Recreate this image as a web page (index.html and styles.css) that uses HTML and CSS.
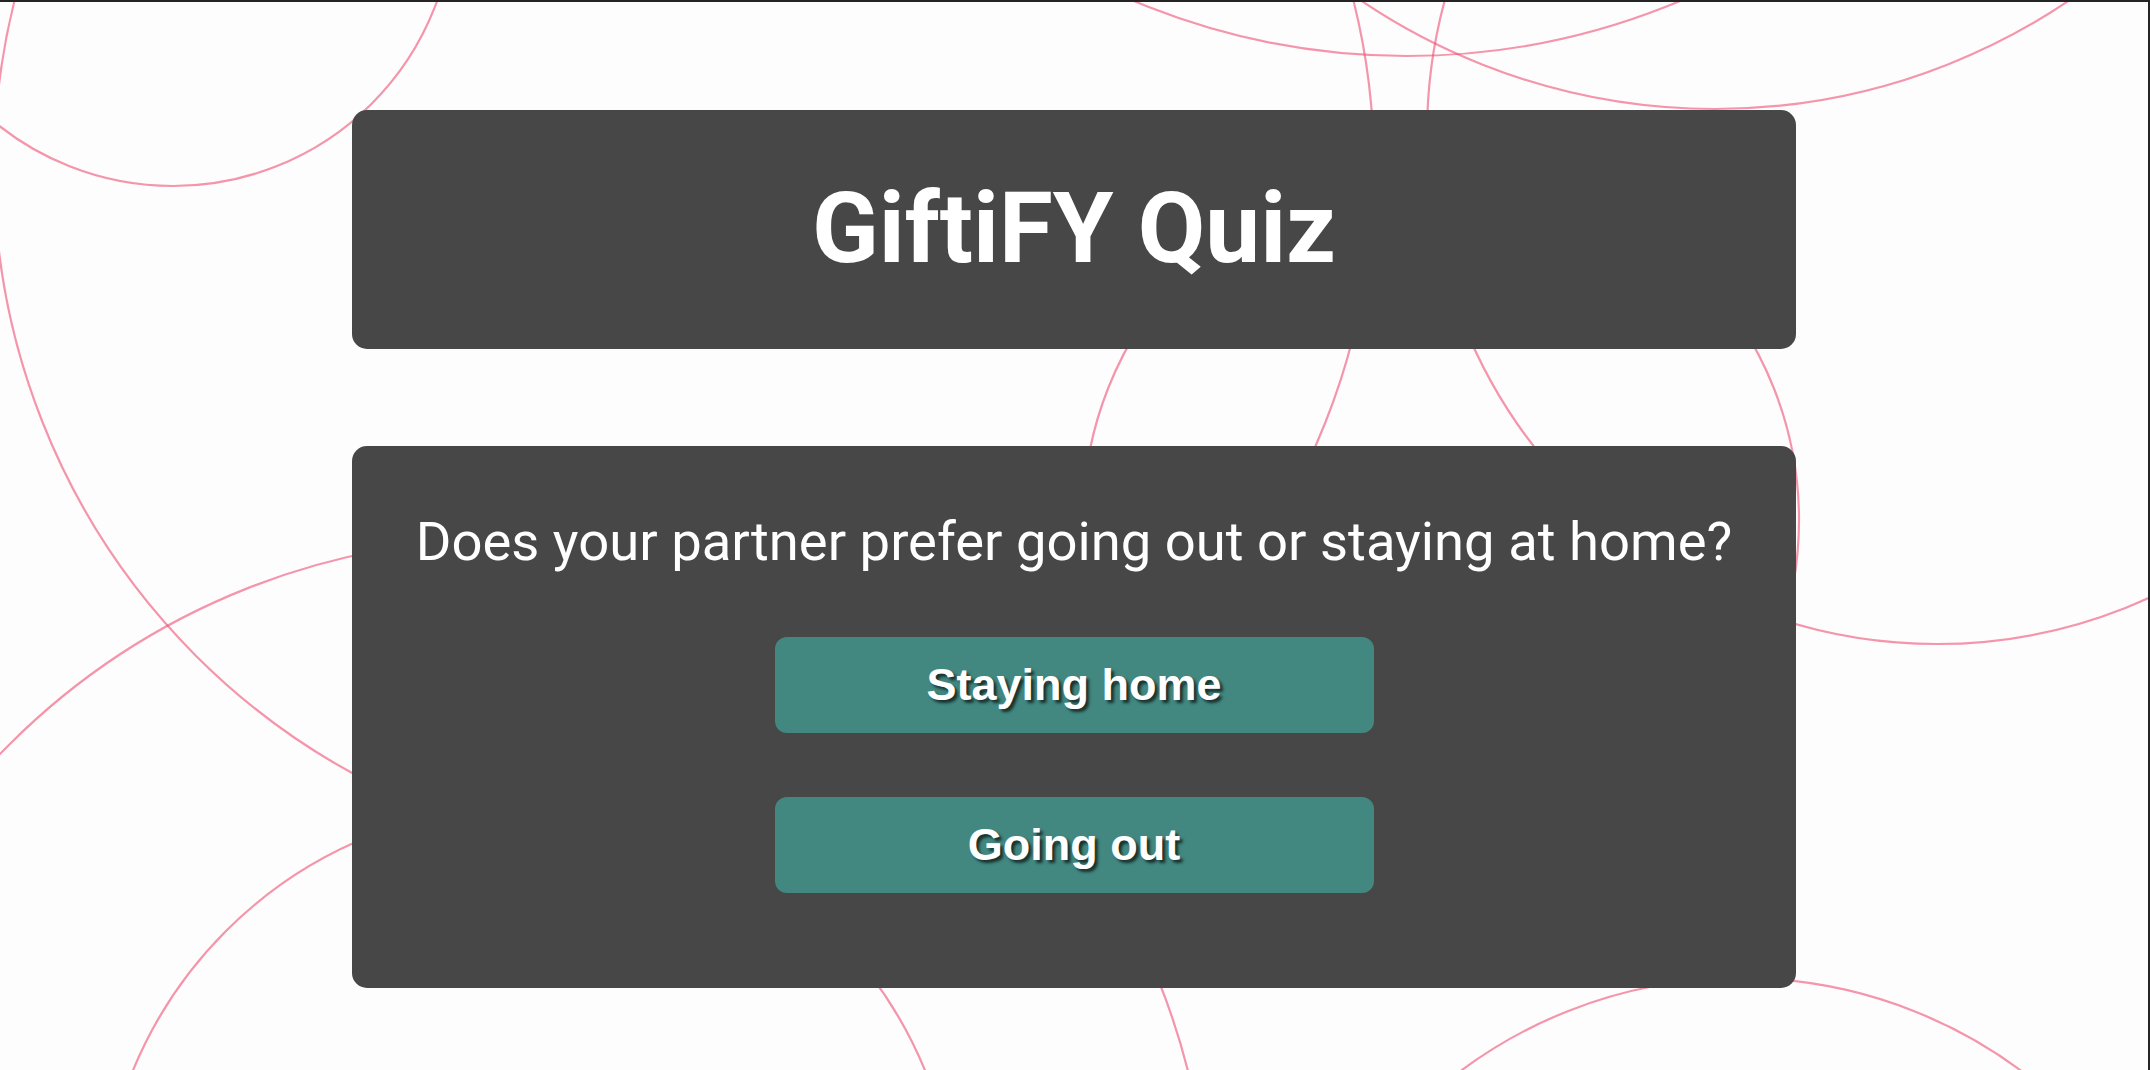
FILE: index.html
```html
<!DOCTYPE html>
<html lang="en">
<head>
<meta charset="utf-8">
<title>GiftiFY Quiz</title>
<link rel="stylesheet" href="styles.css">
</head>
<body>
<div class="page">
  <svg class="bg" viewBox="0 2 2148 1068" preserveAspectRatio="none" aria-hidden="true">
    <g class="rings">
      <circle cx="173" cy="-95" r="281"/>
      <circle cx="684" cy="168" r="690"/>
      <circle cx="1407" cy="-649" r="705"/>
      <circle cx="1715" cy="-522" r="631"/>
      <circle cx="1937" cy="134" r="510"/>
      <circle cx="1441" cy="520" r="358"/>
      <circle cx="529" cy="1234" r="428.5"/>
      <circle cx="506" cy="1242" r="703"/>
      <circle cx="1741" cy="1447" r="469"/>
    </g>
  </svg>
  <main class="content">
    <header class="card title-card">
      <h1 class="title">GiftiFY Quiz</h1>
    </header>
    <section class="card question-card">
      <p class="question">Does your partner prefer going out or staying at home?</p>
      <button class="answer" type="button">Staying home</button>
      <button class="answer" type="button">Going out</button>
    </section>
  </main>
</div>
</body>
</html>
```

FILE: styles.css
```css
html, body {
  margin: 0;
  padding: 0;
}

body {
  background: #fefdfd;
  font-family: Roboto, "Liberation Sans", Arial, sans-serif;
  overflow: hidden;
}

.page {
  position: relative;
  box-sizing: border-box;
  height: 100vh;
  width: 100vw;
  border-top: 2px solid #242424;
  border-right: 2px solid #242424;
  overflow: hidden;
}

.bg {
  position: absolute;
  top: 0;
  left: 0;
  width: 100%;
  height: 100%;
  z-index: 0;
}

.rings circle {
  fill: none;
  stroke: #ec4a70;
  stroke-opacity: 0.58;
  stroke-width: 2.2;
}

.content {
  position: relative;
  z-index: 1;
  display: flex;
  flex-direction: column;
  align-items: center;
  gap: 97px;
  padding-top: 108px;
}

.card {
  box-sizing: border-box;
  width: 1444px;
  background: #474747;
  border-radius: 15px;
}

.title-card {
  height: 239px;
  display: flex;
  align-items: center;
  justify-content: center;
}

.title {
  margin: 0;
  color: #ffffff;
  font-family: Roboto, "Liberation Sans", sans-serif;
  font-weight: 700;
  font-size: 98px;
  line-height: 1.172;
}

.question-card {
  height: 542px;
  padding: 64px 0 0;
  display: flex;
  flex-direction: column;
  align-items: center;
  gap: 64px;
}

.question {
  margin: 0;
  color: #ffffff;
  font-family: Roboto, "Liberation Sans", sans-serif;
  font-weight: 400;
  font-size: 54.4px;
  line-height: 63px;
}

.answer {
  width: 599px;
  height: 96px;
  border: none;
  border-radius: 12px;
  background: #428880;
  color: #ffffff;
  font-family: "Liberation Sans", Arial, sans-serif;
  font-weight: 700;
  font-size: 45px;
  padding: 0;
  text-shadow: 3px 3px 3px rgba(0, 0, 0, 0.65);
  cursor: pointer;
}
```
